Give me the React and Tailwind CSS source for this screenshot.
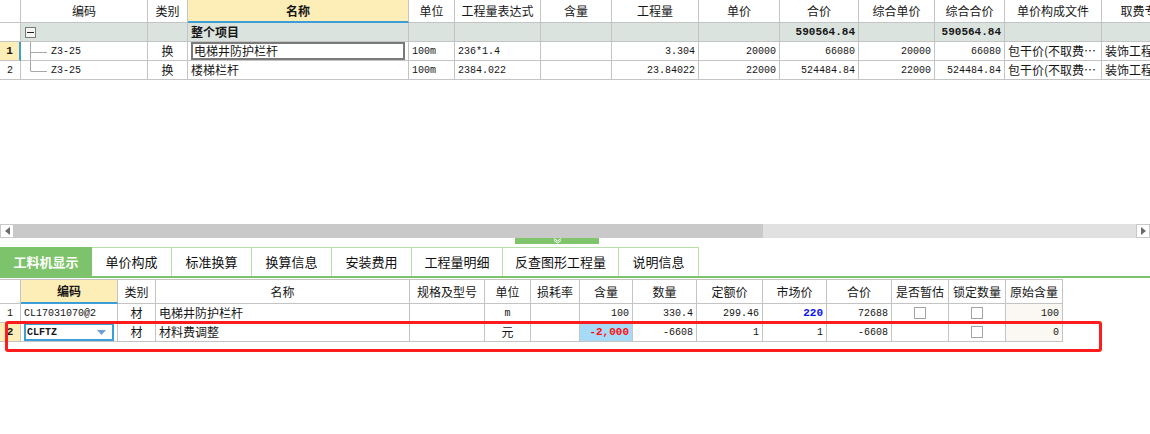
import React from "react";

const cjk = "font-['Noto_Sans_CJK_SC',sans-serif]";
const mono = "font-['Liberation_Mono',monospace]";

const topCols =
  "grid grid-cols-[21px_127px_40px_221px_46px_86px_71px_87px_81px_79px_76px_70px_97px_86px] w-max";
const botCols =
  "grid grid-cols-[21px_97px_38px_254px_75px_46px_49px_53px_64px_66px_64px_65px_57px_57px_57px] w-max";

const cell =
  "flex items-center h-full border-r border-b border-[#c4c4c4] px-[3px] whitespace-nowrap overflow-hidden";

function C({ className = "", children }) {
  return <div className={`${cell} ${className}`}>{children}</div>;
}

function Num({ children, bold, className = "" }) {
  return (
    <C className={`justify-end ${mono} ${bold ? "text-[11px] font-bold" : "text-[10px]"} ${className}`}>
      {children}
    </C>
  );
}

function Txt({ children, center, bold, className = "" }) {
  return (
    <C className={`${cjk} text-[12px] leading-none ${center ? "justify-center" : ""} ${bold ? "font-bold" : ""} ${className}`}>
      {children}
    </C>
  );
}

function Check() {
  return <div className="w-[12px] h-[12px] border border-[#a3a3a3] bg-white" />;
}

function Tree({ last }) {
  return (
    <svg width="28" height="19" className="shrink-0 -ml-[3px]">
      <line x1="9.5" y1="0" x2="9.5" y2={last ? 10 : 19} stroke="#a8a8a8" />
      <line x1="9.5" y1="10.5" x2="26" y2="10.5" stroke="#a8a8a8" />
    </svg>
  );
}

const topHead = ["编码", "类别", "名称", "单位", "工程量表达式", "含量", "工程量", "单价", "合价", "综合单价", "综合合价", "单价构成文件", "取费专业"];

const topRows = [
  { n: "1", code: "Z3-25", name: "电梯井防护栏杆", unit: "100m", expr: "236*1.4", qty: "3.304", price: "20000", total: "66080", cprice: "20000", ctotal: "66080" },
  { n: "2", code: "Z3-25", name: "楼梯栏杆", unit: "100m", expr: "2384.022", qty: "23.84022", price: "22000", total: "524484.84", cprice: "22000", ctotal: "524484.84" },
];

const botHead = ["规格及型号", "单位", "损耗率", "含量", "数量", "定额价", "市场价", "合价", "是否暂估", "锁定数量", "原始含量"];

const tabs = [
  { t: "单价构成", w: "w-[80px]" },
  { t: "标准换算", w: "w-[80px]" },
  { t: "换算信息", w: "w-[80px]" },
  { t: "安装费用", w: "w-[80px]" },
  { t: "工程量明细", w: "w-[91px]" },
  { t: "反查图形工程量", w: "w-[116px]" },
  { t: "说明信息", w: "w-[80px]" },
];

export default function App() {
  return (
    <div className="w-[1150px] h-[434px] bg-white overflow-hidden text-[#161616]">
      {/* top grid */}
      <div className="h-[224px] overflow-hidden">
        <div className={`${topCols} h-[23px]`}>
          <C />
          {topHead.map((h, i) => (
            <Txt
              key={h}
              center
              bold={i === 2}
              className={i === 2 ? "bg-[#fdedb6] border-b-2 border-b-[#3c9dd7]" : ""}
            >
              {h}
            </Txt>
          ))}
        </div>
        <div className={`${topCols} h-[19px]`}>
          <C />
          <C className="bg-[#dae3de]">
            <div className="ml-[1px] w-[11px] h-[11px] border border-[#7a7a7a] bg-[#f4f4f4] flex items-center justify-center">
              <div className="w-[7px] h-[1px] bg-[#222]" />
            </div>
          </C>
          <C className="bg-[#dae3de]" />
          <Txt bold className="bg-[#dae3de]">整个项目</Txt>
          <C className="bg-[#dae3de]" />
          <C className="bg-[#dae3de]" />
          <C className="bg-[#dae3de]" />
          <C className="bg-[#dae3de]" />
          <C className="bg-[#dae3de]" />
          <Num bold className="bg-[#dae3de]">590564.84</Num>
          <C className="bg-[#dae3de]" />
          <Num bold className="bg-[#dae3de]">590564.84</Num>
          <C className="bg-[#dae3de]" />
          <C className="bg-[#dae3de]" />
        </div>
        {topRows.map((r, i) => (
          <div key={r.n} className={`${topCols} h-[19px]`}>
            {i === 0 ? (
              <C className={`justify-center bg-[#fdedb6] border-r-2 border-r-[#3c9dd7] ${mono} text-[11px] font-bold`}>{r.n}</C>
            ) : (
              <C className={`justify-center ${mono} text-[10px]`}>{r.n}</C>
            )}
            <C className={`${mono} text-[10px]`}>
              <Tree last={i === 1} />
              <span className="ml-[2px]">{r.code}</span>
            </C>
            <Txt center>换</Txt>
            {i === 0 ? (
              <C className={`px-0 ${cjk} text-[12px] leading-none`}>
                <div className="w-[214px] h-full border-2 border-[#7a7a7a] flex items-center pl-[1px]">{r.name}</div>
              </C>
            ) : (
              <Txt>{r.name}</Txt>
            )}
            <C className={`${mono} text-[10px]`}>{r.unit}</C>
            <C className={`${mono} text-[10px]`}>{r.expr}</C>
            <C />
            <Num>{r.qty}</Num>
            <Num>{r.price}</Num>
            <Num>{r.total}</Num>
            <Num>{r.cprice}</Num>
            <Num>{r.ctotal}</Num>
            <Txt className="px-[2px]">包干价(不取费…</Txt>
            <Txt className="px-[2px]">装饰工程</Txt>
          </div>
        ))}
      </div>

      {/* horizontal scrollbar */}
      <div className="flex h-[14px] bg-[#e1e1e1]">
        <div className="w-[14px] h-full bg-white border border-[#c9c9c9] flex items-center justify-center">
          <svg width="5" height="8"><polygon points="5,0 5,8 0,4" fill="#6b6b6b" /></svg>
        </div>
        <div className="w-[749px] h-full bg-[#c9c9c9]" />
        <div className="flex-1" />
        <div className="w-[14px] h-full bg-white border border-[#c9c9c9] flex items-center justify-center">
          <svg width="5" height="8"><polygon points="0,0 0,8 5,4" fill="#6b6b6b" /></svg>
        </div>
      </div>

      {/* splitter */}
      <div className="h-[9px]">
        <div className="ml-[515px] w-[84px] h-[6px] bg-[#80c46c] flex justify-center">
          <svg width="9" height="6">
            <polyline points="1,0.5 4.5,3 8,0.5" fill="none" stroke="#fff" strokeWidth="1" />
            <polyline points="1,2.5 4.5,5 8,2.5" fill="none" stroke="#fff" strokeWidth="1" />
          </svg>
        </div>
      </div>

      {/* tabs */}
      <div className={`flex h-[31px] border-b-2 border-[#7dc36b] ${cjk} text-[13px]`}>
        <div className="w-[92px] h-full bg-[#7dc36b] text-white font-bold flex items-center justify-center">工料机显示</div>
        {tabs.map((t) => (
          <div key={t.t} className={`${t.w} h-full border-t border-r border-[#b7e0a8] text-[#111] flex items-center justify-center`}>
            {t.t}
          </div>
        ))}
      </div>

      {/* bottom grid */}
      <div className="relative mt-[1px]">
        <div className={`${botCols} h-[25px] border-t border-[#c4c4c4]`}>
          <C />
          <Txt center bold className="bg-[#fdedb6] border-b-2 border-b-[#3c9dd7]">编码</Txt>
          <Txt center>类别</Txt>
          <Txt center>名称</Txt>
          {botHead.map((h) => (
            <Txt key={h} center className="px-0">{h}</Txt>
          ))}
        </div>
        <div className={`${botCols} h-[19px]`}>
          <C className={`justify-center ${mono} text-[10px]`}>1</C>
          <C className={`${mono} text-[10px]`}>CL17031070@2</C>
          <Txt center>材</Txt>
          <Txt>电梯井防护栏杆</Txt>
          <C />
          <C className={`justify-center ${mono} text-[10px]`}>m</C>
          <C />
          <Num>100</Num>
          <Num>330.4</Num>
          <Num>299.46</Num>
          <Num bold><span className="text-[#0a14f0]">220</span></Num>
          <Num>72688</Num>
          <C className="justify-center"><Check /></C>
          <C className="justify-center"><Check /></C>
          <Num className="bg-[#fbf8f3]">100</Num>
        </div>
        <div className={`${botCols} h-[19px]`}>
          <C className={`justify-center bg-[#fdedb6] ${mono} text-[11px] font-bold`}>2</C>
          <C className="px-0">
            <div className={`w-full h-full border-2 border-[#3ca0d8] flex items-center justify-between pl-[1px] pr-[6px] ${mono} text-[10px] font-bold`}>
              CLFTZ
              <svg width="9" height="5"><polygon points="0,0 9,0 4.5,5" fill="#6f9fd3" /></svg>
            </div>
          </C>
          <Txt center>材</Txt>
          <Txt>材料费调整</Txt>
          <C />
          <Txt center>元</Txt>
          <C />
          <Num bold className="bg-[#a6daf7]"><span className="text-[#ff1010]">-2,000</span></Num>
          <Num>-6608</Num>
          <Num>1</Num>
          <Num>1</Num>
          <Num>-6608</Num>
          <C />
          <C className="justify-center"><Check /></C>
          <Num className="bg-[#fbf8f3]">0</Num>
        </div>

        {/* red annotation box */}
        <div className="absolute left-[5px] top-[42px] w-[1097px] h-[31px] border-[3px] border-[#ff1c1c] rounded-[3px]" />
      </div>
    </div>
  );
}
